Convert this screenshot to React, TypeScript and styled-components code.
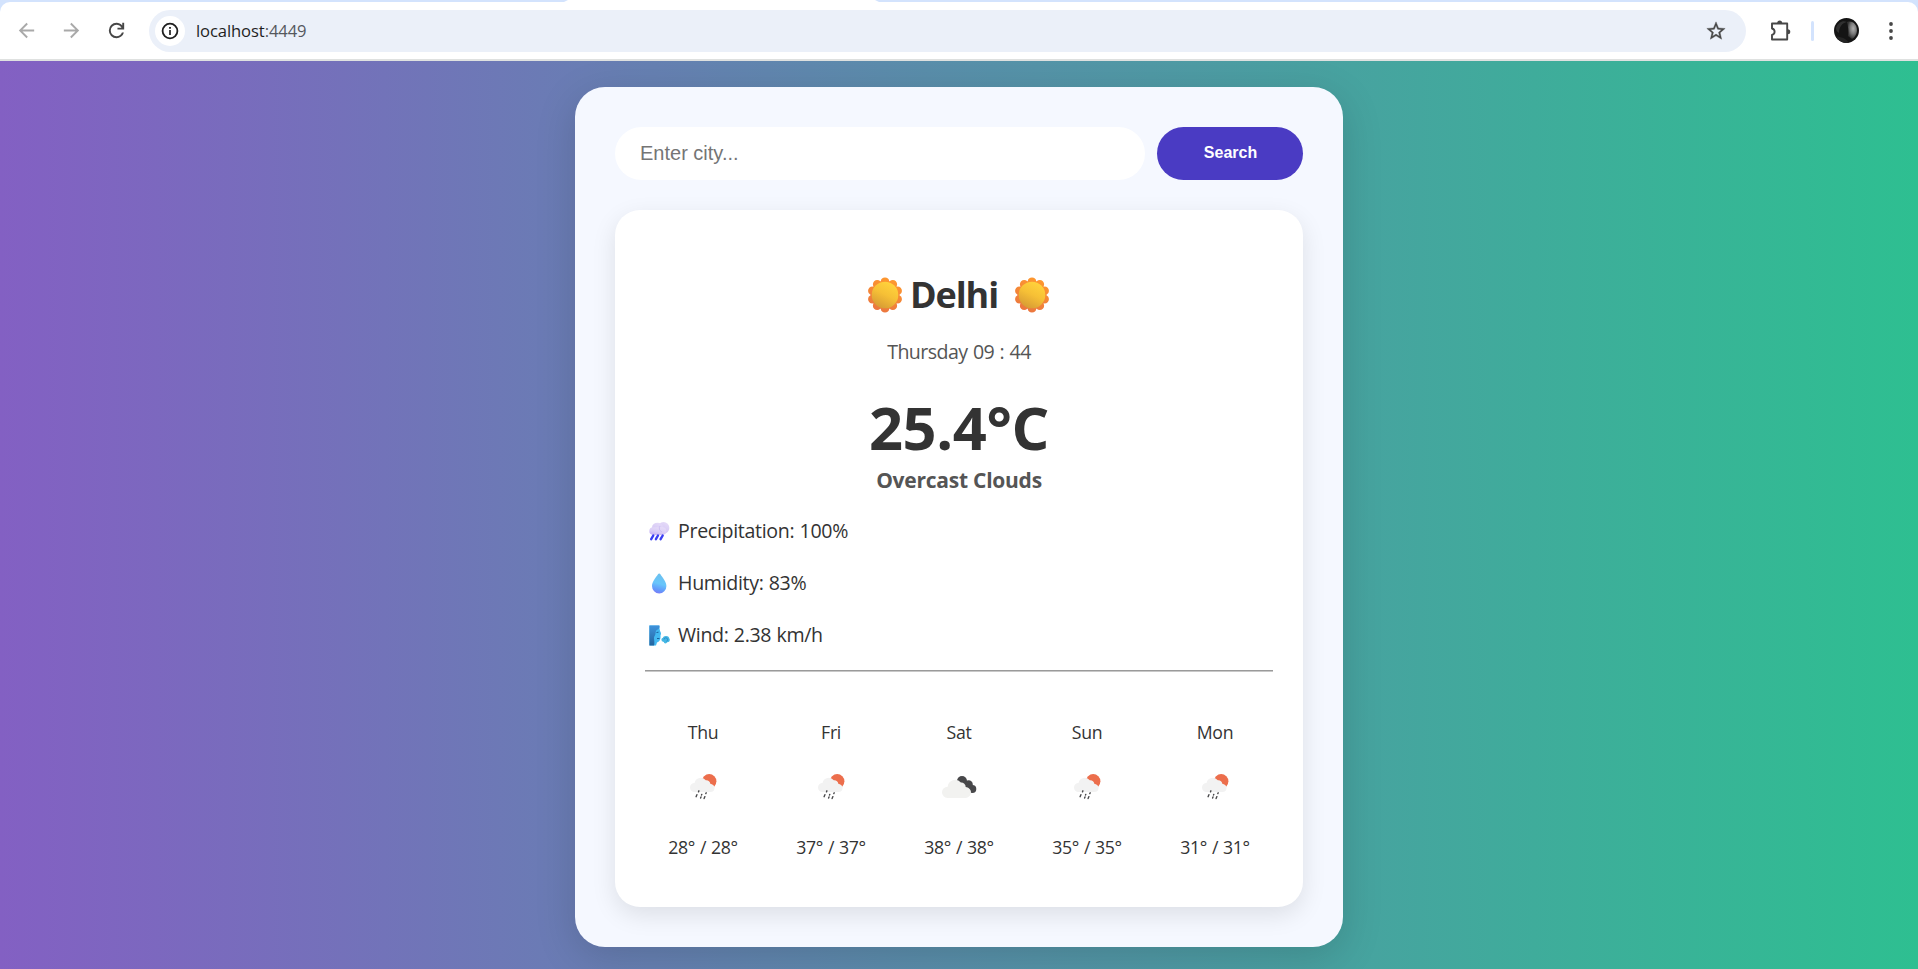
import React from "react";
import styled, { createGlobalStyle } from "styled-components";

const GlobalStyle = createGlobalStyle`
  *, *::before, *::after { box-sizing: border-box; }
  html, body { margin: 0; padding: 0; }
  body {
    height: 969px;
    overflow: hidden;
    font-family: "Open Sans", "Noto Sans", sans-serif;
    color: #333;
  }
`;

const Screen = styled.div`
  display: flex;
  flex-direction: column;
  width: 100%;
  height: 969px;
`;

/* ---------- browser chrome ---------- */

const Chrome = styled.header`
  display: flex;
  flex-direction: column;
  height: 61px;
  background: #d3e3fd;
`;

const TabStrip = styled.div`
  display: flex;
  height: 2px;
  padding-left: 564px;
`;

const ActiveTab = styled.div`
  width: 315px;
  height: 2px;
  background: #fff;
  clip-path: polygon(4px 0, 311px 0, 100% 100%, 0 100%);
`;

const Toolbar = styled.div`
  display: flex;
  align-items: center;
  height: 59px;
  padding: 0 24px 0 14px;
  background: #fff;
  border-bottom: 2px solid #dfe1e0;
  border-radius: 10px 10px 0 0;
`;

const NavButton = styled.span<{ $muted?: boolean }>`
  display: flex;
  justify-content: center;
  width: 24px;
  margin-right: 21px;
  color: ${(p) => (p.$muted ? "#a9a9a9" : "#474747")};
`;

const AddressBar = styled.div`
  display: flex;
  align-items: center;
  flex: 1;
  height: 42px;
  padding: 0 19px 0 6px;
  border-radius: 21px;
  background: #ebf0f9;
  color: #474747;
`;

const SiteInfo = styled.span`
  display: flex;
  align-items: center;
  justify-content: center;
  width: 30px;
  height: 30px;
  border-radius: 50%;
  background: #fff;
  color: #1f1f1f;
`;

const Url = styled.span`
  flex: 1;
  margin-left: 11px;
  padding-top: 1px;
  font-size: 16.6px;
  line-height: 24px;
  letter-spacing: -0.1px;
  color: #1f1f1f;
`;

const Port = styled.span`
  color: #55585d;
`;

const Actions = styled.div`
  display: flex;
  align-items: center;
  padding-left: 22px;
  color: #474747;
`;

const Divider = styled.span`
  width: 3px;
  height: 20px;
  margin: 0 20px 0 19px;
  border-radius: 2px;
  background: #d3e3fd;
`;

const Avatar = styled.svg`
  width: 25px;
  height: 25px;
  margin-right: 29px;
`;

/* ---------- page ---------- */

const Page = styled.main`
  display: flex;
  justify-content: center;
  align-items: flex-start;
  flex: 1;
  padding-top: 26px;
  background: linear-gradient(to right, #8360c3, #2ebf91);
`;

const Container = styled.section`
  width: 768px;
  height: 860px;
  padding: 40px;
  border-radius: 30px;
  background: #f5f8ff;
  box-shadow: 0 10px 40px rgba(0, 0, 0, 0.15);
`;

const SearchForm = styled.form`
  display: flex;
  gap: 12px;
  margin-bottom: 30px;
`;

const CityInput = styled.input`
  flex: 1;
  height: 53px;
  padding: 0 25px;
  border: 0;
  border-radius: 30px;
  background: #fff;
  font: 20px "Liberation Sans", Arial, sans-serif;
  &::placeholder { color: #757575; opacity: 1; }
`;

const SearchButton = styled.button`
  width: 146px;
  height: 53px;
  padding: 0 0 1px 1px;
  border: 0;
  border-radius: 30px;
  background: #4a3bc3;
  color: #fff;
  font: bold 16px "Liberation Sans", Arial, sans-serif;
`;

const Card = styled.article`
  display: flex;
  flex-direction: column;
  height: 697px;
  padding: 61px 30px 0;
  border-radius: 25px;
  background: #fff;
  box-shadow: 0 8px 25px rgba(0, 0, 0, 0.1);
`;

const Title = styled.h1`
  display: flex;
  align-items: center;
  justify-content: center;
  height: 48px;
  margin: 0;
  padding-right: 1px;
  font-size: 36px;
  font-weight: 700;
  line-height: 48px;
  letter-spacing: -1.1px;
`;

const CityName = styled.span`
  margin: 0 16px 0 7px;
`;

const DateLine = styled.p`
  margin: 19px 0 0;
  font-size: 19.6px;
  line-height: 28px;
  letter-spacing: -0.55px;
  word-spacing: 0.8px;
  text-align: center;
  color: #555;
`;

const Temperature = styled.p`
  margin: 31px 0 0;
  font-size: 59.5px;
  font-weight: 700;
  line-height: 60px;
  letter-spacing: -0.4px;
  text-align: center;
`;

const Condition = styled.p`
  margin: 9px 0 0;
  font-size: 21px;
  font-weight: 700;
  line-height: 28px;
  letter-spacing: -0.25px;
  text-align: center;
  color: #555;
`;

const Details = styled.ul`
  display: flex;
  flex-direction: column;
  gap: 24px;
  margin: 23px 0 0;
  padding: 0;
  list-style: none;
`;

const Detail = styled.li`
  display: flex;
  align-items: center;
  gap: 8.5px;
  height: 28px;
  padding-left: 3.5px;
  font-size: 19.6px;
  line-height: 28px;
  letter-spacing: -0.32px;
  word-spacing: 0.4px;
`;

const Rule = styled.hr`
  width: 100%;
  height: 2px;
  margin: 21px 0 0;
  border: 0;
  border-top: 1px solid #9a9a9a;
  border-bottom: 1px solid #c8c8c8;
`;

const Forecast = styled.div`
  display: grid;
  grid-template-columns: repeat(5, 1fr);
  gap: 12px;
  margin-top: 48px;
`;

const Day = styled.div`
  display: flex;
  flex-direction: column;
  align-items: center;
  font-size: 17.7px;
  line-height: 24px;
  letter-spacing: -0.35px;
  word-spacing: 0.6px;
`;

const DayIcon = styled.svg`
  width: 50px;
  height: 50px;
  margin: 18px 0 23px;
`;

/* ---------- icons ---------- */

const BackIcon = () => (
  <svg width="23" height="23" viewBox="0 0 24 24" fill="currentColor">
    <path d="M20 11H7.83l5.59-5.59L12 4l-8 8 8 8 1.41-1.41L7.83 13H20v-2z" />
  </svg>
);

const ForwardIcon = () => (
  <svg width="23" height="23" viewBox="0 0 24 24" fill="currentColor">
    <path d="M12 4l-1.41 1.41L16.17 11H4v2h12.17l-5.58 5.59L12 20l8-8z" />
  </svg>
);

const ReloadIcon = () => (
  <svg width="23" height="23" viewBox="0 -960 960 960" fill="currentColor">
    <path d="M480-160q-134 0-227-93t-93-227q0-134 93-227t227-93q69 0 132 28.5T720-690v-110h80v280H520v-80h168q-32-56-87.5-88T480-720q-100 0-170 70t-70 170q0 100 70 170t170 70q77 0 139-44t87-116h84q-28 106-114 173t-196 67Z" />
  </svg>
);

const InfoIcon = () => (
  <svg width="18" height="18" viewBox="0 0 18 18" fill="none" stroke="currentColor">
    <circle cx="9" cy="9" r="7.4" strokeWidth="1.8" />
    <path d="M9 8v5" strokeWidth="1.7" />
    <path d="M9 5v1.8" strokeWidth="1.8" />
  </svg>
);

const StarIcon = () => (
  <svg width="22" height="22" viewBox="0 0 24 24" fill="currentColor" stroke="currentColor" strokeWidth="0.4">
    <path d="M22 9.24l-7.19-.62L12 2 9.19 8.63 2 9.24l5.46 4.73L5.82 21 12 17.27 18.18 21l-1.63-7.03L22 9.24zM12 15.4l-3.76 2.27 1-4.28-3.32-2.88 4.38-.38L12 6.1l1.71 4.04 4.38.38-3.32 2.88 1 4.28L12 15.4z" />
  </svg>
);

const PuzzleIcon = () => (
  <svg width="24" height="24" viewBox="0 0 24 24" fill="none" stroke="currentColor" strokeWidth="1.9">
    <path d="M4 4.5h15.2v16H4v-4.6c1.7-.5 2.6-1.6 2.6-3.2s-.9-2.7-2.6-3.2z" strokeLinejoin="round" />
    <path d="M9.2 4a2.5 2.6 0 0 1 5 0zM19.7 10.2a2.6 2.5 0 0 1 0 5z" fill="currentColor" stroke="none" />
  </svg>
);

const MenuIcon = () => (
  <svg width="6" height="20" viewBox="0 0 6 20" fill="#474747">
    <circle cx="3" cy="3" r="1.9" />
    <circle cx="3" cy="10" r="1.9" />
    <circle cx="3" cy="17" r="1.9" />
  </svg>
);

const Profile = () => (
  <Avatar viewBox="0 0 25 25">
    <defs>
      <clipPath id="avatarClip"><circle cx="12.5" cy="12.5" r="12.5" /></clipPath>
      <radialGradient id="avatarFace" cx="0.62" cy="0.4" r="0.6">
        <stop offset="0" stopColor="#b0b0b0" />
        <stop offset="0.5" stopColor="#7c7c7c" />
        <stop offset="1" stopColor="#303030" />
      </radialGradient>
    </defs>
    <g clipPath="url(#avatarClip)">
      <rect width="25" height="25" fill="#141414" />
      <path d="M13 4c6-2 10 3 10 8s-3 8-5 9l-4-3c1-5 0-9-1-14z" fill="url(#avatarFace)" />
      <path d="M2 10c2-6 7-8 11-6-5 1-8 5-8 11-2-1-3-3-3-5z" fill="#303030" />
      <path d="M0 19c6-1 12 1 15 6H0z" fill="#242424" />
    </g>
  </Avatar>
);

const scallops = Array.from({ length: 10 }, (_, i) => {
  const a = (i * 36 * Math.PI) / 180;
  return { x: 18 + 13.3 * Math.sin(a), y: 18 - 13.3 * Math.cos(a) };
});

const SunEmoji = () => (
  <svg width="36" height="36" viewBox="0 0 36 36">
    <defs>
      <linearGradient id="sunRays" x1="0.7" y1="0" x2="0.3" y2="1">
        <stop offset="0" stopColor="#ff9a2e" />
        <stop offset="1" stopColor="#ea7440" />
      </linearGradient>
      <linearGradient id="sunDisc" x1="0.75" y1="0.1" x2="0.3" y2="1">
        <stop offset="0" stopColor="#ffd13b" />
        <stop offset="0.45" stopColor="#f6c036" />
        <stop offset="1" stopColor="#d69a34" />
      </linearGradient>
      <clipPath id="sunShape">
        <circle cx="18" cy="18" r="14.5" />
        {scallops.map((s, i) => (
          <circle key={i} cx={s.x} cy={s.y} r="4.3" />
        ))}
      </clipPath>
    </defs>
    <rect width="36" height="36" fill="url(#sunRays)" clipPath="url(#sunShape)" />
    <circle cx="18" cy="18" r="13.3" fill="url(#sunDisc)" />
  </svg>
);

const RainEmoji = () => (
  <svg width="21" height="21" viewBox="0 0 21 21">
    <defs>
      <linearGradient id="rainCloud" x1="0.8" y1="0" x2="0.3" y2="1">
        <stop offset="0" stopColor="#e6dcf8" />
        <stop offset="0.6" stopColor="#d9ccf6" />
        <stop offset="1" stopColor="#c6b2f4" />
      </linearGradient>
    </defs>
    <g fill="url(#rainCloud)">
      <circle cx="14.5" cy="6.9" r="5.9" />
      <ellipse cx="8.5" cy="6.5" rx="5.5" ry="4.8" />
      <rect x="0.3" y="6.3" width="17" height="7.6" rx="3.8" />
    </g>
    <path d="M11 5a4 4 0 0 0 2 6" stroke="#c6b6f0" strokeWidth="0.7" fill="none" />
    <path d="M4.3 14.5l-2.1 3.7M9 14.5l-2.1 3.7M13.7 14.5l-2.1 3.7" stroke="#3b3ff2" strokeWidth="2.4" strokeLinecap="round" />
  </svg>
);

const DropEmoji = () => (
  <svg width="21" height="21" viewBox="0 0 21 21">
    <defs>
      <linearGradient id="drop" x1="0.6" y1="0" x2="0.4" y2="1">
        <stop offset="0" stopColor="#6cc0ee" />
        <stop offset="0.5" stopColor="#68c6fb" />
        <stop offset="0.8" stopColor="#629bfb" />
        <stop offset="1" stopColor="#7a7cf8" />
      </linearGradient>
    </defs>
    <path d="M10.2.6c.5 0 .9.3 1.2.7 2.4 3.7 6 7.6 6 11.7a7.2 7.5 0 0 1-14.4 0c0-4.1 3.5-8 6-11.7.3-.4.7-.7 1.2-.7z" fill="url(#drop)" />
  </svg>
);

const WindEmoji = () => (
  <svg width="21" height="21" viewBox="0 0 21 21">
    <defs>
      <linearGradient id="windHair" x1="0" y1="0" x2="0" y2="1">
        <stop offset="0" stopColor="#3f93dc" />
        <stop offset="1" stopColor="#22649f" />
      </linearGradient>
    </defs>
    <path d="M.4.5H10c.6 2.7.6 5 1.8 7 .5 1.5 0 2-.3 3 .3 3-.5 6-3.5 7l-1 3H.4z" fill="#43b9f2" />
    <path d="M.4.5H10.6c.4 2-.6 4-3 4.5-1.5 1.5-.5 4-2 6s.5 5-.5 9.5H.4z" fill="url(#windHair)" />
    <path d="M7.5 7.5l2-.3M8 13.5h2.5" stroke="#1a5f9e" strokeWidth="1" />
    <g fill="#45b7e4">
      <circle cx="17" cy="14.3" r="3.3" />
      <circle cx="14.4" cy="14.8" r="2" />
      <circle cx="18.8" cy="15" r="2" />
      <circle cx="16.4" cy="16.8" r="1.6" />
    </g>
    <path d="M15 14.5a1.8 1.8 0 1 1 2.4 1.8" stroke="#2682c4" strokeWidth="0.8" fill="none" />
  </svg>
);

const RainSunIcon = () => (
  <DayIcon viewBox="0 0 50 50">
    <circle cx="31.2" cy="19.3" r="7.2" fill="#ec6e4c" />
    <path d="M16.5 30a4.5 4.5 0 0 1 0-9 6.3 6.3 0 0 1 11.3-2.7c2.3-.3 4.2 1.2 4.5 3.4 2 .3 4 1.8 4.3 3.7 0 3-1.6 4.6-4.4 4.6z" fill="#f2f2f2" />
    <path d="M20.9 28.8l-.4 1.1M18.9 32.7l-.8 2M23.8 32.4l-.3.6M23 35l-.4 1M28.2 30.8l-.4.8M26.9 34.6l-.8 2" stroke="#48484a" strokeWidth="1.4" strokeLinecap="round" />
  </DayIcon>
);

const CloudsIcon = () => (
  <DayIcon viewBox="0 0 50 50">
    <g fill="#48484a">
      <circle cx="28" cy="19" r="5" />
      <circle cx="34.6" cy="22.5" r="4.2" />
      <circle cx="38.3" cy="27" r="4" />
      <path d="M27 22l8 8 4-3-7-8z" />
    </g>
    <path d="M13.5 36a5.6 5.6 0 0 1 .2-11.2 7.5 7.5 0 0 1 13.2-4.4 4.5 4.5 0 0 1 4.8 4.6c2.7.4 5.3 2.5 5.3 5.3a5.6 5.6 0 0 1-5 5.7z" fill="#f2f2f0" />
  </DayIcon>
);

/* ---------- data ---------- */

const details = [
  { Icon: RainEmoji, text: "Precipitation: 100%" },
  { Icon: DropEmoji, text: "Humidity: 83%" },
  { Icon: WindEmoji, text: "Wind: 2.38 km/h" },
];

const days = [
  { name: "Thu", Icon: RainSunIcon, range: "28° / 28°" },
  { name: "Fri", Icon: RainSunIcon, range: "37° / 37°" },
  { name: "Sat", Icon: CloudsIcon, range: "38° / 38°" },
  { name: "Sun", Icon: RainSunIcon, range: "35° / 35°" },
  { name: "Mon", Icon: RainSunIcon, range: "31° / 31°" },
];

export default function App() {
  return (
    <Screen>
      <GlobalStyle />
      <Chrome>
        <TabStrip><ActiveTab /></TabStrip>
        <Toolbar>
          <NavButton $muted><BackIcon /></NavButton>
          <NavButton $muted><ForwardIcon /></NavButton>
          <NavButton><ReloadIcon /></NavButton>
          <AddressBar>
            <SiteInfo><InfoIcon /></SiteInfo>
            <Url>localhost<Port>:4449</Port></Url>
            <StarIcon />
          </AddressBar>
          <Actions>
            <PuzzleIcon />
            <Divider />
            <Profile />
            <MenuIcon />
          </Actions>
        </Toolbar>
      </Chrome>
      <Page>
        <Container>
          <SearchForm onSubmit={(e) => e.preventDefault()}>
            <CityInput placeholder="Enter city..." />
            <SearchButton type="submit">Search</SearchButton>
          </SearchForm>
          <Card>
            <Title>
              <SunEmoji />
              <CityName>Delhi</CityName>
              <SunEmoji />
            </Title>
            <DateLine>Thursday 09 : 44</DateLine>
            <Temperature>25.4°C</Temperature>
            <Condition>Overcast Clouds</Condition>
            <Details>
              {details.map(({ Icon, text }) => (
                <Detail key={text}><Icon />{text}</Detail>
              ))}
            </Details>
            <Rule />
            <Forecast>
              {days.map(({ name, Icon, range }) => (
                <Day key={name}>
                  {name}
                  <Icon />
                  {range}
                </Day>
              ))}
            </Forecast>
          </Card>
        </Container>
      </Page>
    </Screen>
  );
}
